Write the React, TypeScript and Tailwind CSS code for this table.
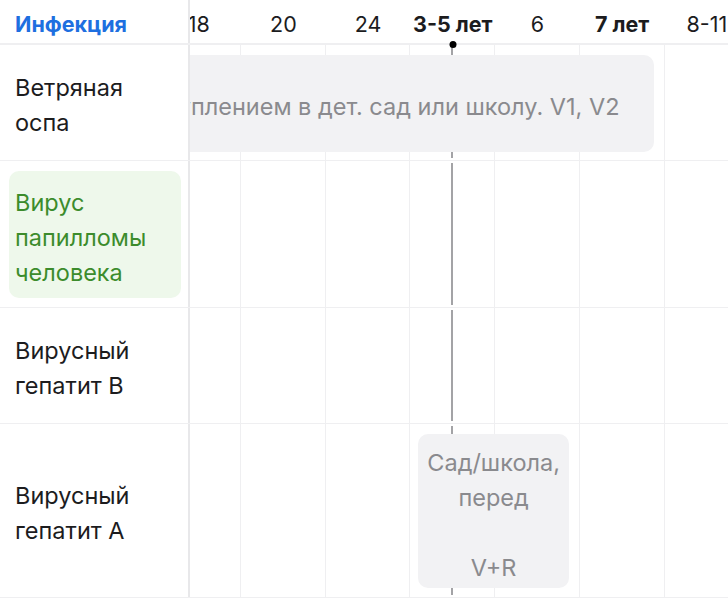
const COLS = ['12', '15', '18', '20', '24', '3-5 лет', '6', '7 лет', '8-11'];
const BOLD = ['3-5 лет', '7 лет'];
const TODAY = 5;
const START = ['col-start-1', 'col-start-2', 'col-start-3', 'col-start-4', 'col-start-5', 'col-start-6', 'col-start-7', 'col-start-8', 'col-start-9'];

function Cells() {
  return <>
    {COLS.map((c, i) => (
      <div key={c} className={`${START[i]} row-start-1 relative border-r border-[#efeff1]`}>
        {i === TODAY && <div className="absolute left-1/2 -translate-x-1/2 top-[2px] bottom-[2px] w-[2px] bg-[#a3a3a6]" />}
      </div>
    ))}
  </>;
}

function Row({ height, label, children }: { height: string; label: React.ReactNode; children?: React.ReactNode }) {
  return <div className={`flex border-b border-[#efeff1] ${height}`}>
    <div className="w-[190px] shrink-0 border-r-2 border-[#e8e8ea] flex">{label}</div>
    <div className="flex-1 overflow-x-clip">
      <div className="ml-[-203px] grid grid-cols-[repeat(9,84.7px)] h-full">
        <Cells />
        {children}
      </div>
    </div>
  </div>;
}

function Name({ lines }: { lines: string[] }) {
  return <div className="px-[15px] pt-[5px] flex flex-col justify-center text-[23.5px] leading-[35px] text-[#1c1c1e]">
    {lines.map(l => <span key={l}>{l}</span>)}
  </div>;
}

export default function App() {
  return <div className="w-[728px] h-[600px] overflow-hidden bg-white font-['Inter',sans-serif]">
    <div className="flex h-[45px] border-b-2 border-[#efeff1]">
      <div className="w-[190px] shrink-0 border-r-2 border-[#e8e8ea] px-[15px] pt-[5px] flex items-center text-[21.5px] font-bold text-[#1e6fe0]">Инфекция</div>
      <div className="flex-1 overflow-x-clip">
        <div className="ml-[-203px] grid grid-cols-[repeat(9,84.7px)] h-full">
          {COLS.map((c, i) => (
            <div key={c} className={`relative pt-[5px] flex items-center justify-center whitespace-nowrap text-[21.5px] text-[#1c1c1e] ${BOLD.includes(c) ? 'font-bold' : ''}`}>
              {c}
              {i === TODAY && <div className="absolute left-1/2 -translate-x-1/2 bottom-[-5px] w-[7px] h-[7px] rounded-full bg-black z-10" />}
            </div>
          ))}
        </div>
      </div>
    </div>

    <Row height="h-[116px]" label={<Name lines={['Ветряная', 'оспа']} />}>
      <div className="col-start-1 col-span-8 row-start-1 relative z-10 mt-[10px] mb-[8px] mr-[11px] rounded-[10px] bg-[#f2f2f4] overflow-hidden flex items-center justify-end pt-[6px] pr-[34px] whitespace-nowrap text-[23.5px] text-[#8a8a8e]">
        Перед поступлением в дет. сад или школу. V1, V2
      </div>
    </Row>

    <Row height="h-[147px]" label={
      <div className="flex-1 mt-[10px] mb-[9px] ml-[9px] mr-[7px] rounded-[10px] bg-[#eef8eb] px-[6px] pt-[5px] flex flex-col justify-center text-[23.5px] leading-[35px] text-[#3c8c2c]">
        <span>Вирус</span>
        <span>папилломы</span>
        <span>человека</span>
      </div>
    } />

    <Row height="h-[116px]" label={<Name lines={['Вирусный', 'гепатит B']} />} />

    <Row height="h-[174px]" label={<Name lines={['Вирусный', 'гепатит A']} />}>
      <div className="col-start-6 col-span-2 row-start-1 relative z-10 mt-[10px] mb-[9px] ml-[8px] mr-[11px] rounded-[10px] bg-[#f2f2f4] pt-[11px] flex flex-col items-center text-[23.5px] leading-[35px] text-[#8a8a8e]">
        <span>Сад/школа,</span>
        <span>перед</span>
        <span>&nbsp;</span>
        <span>V+R</span>
      </div>
    </Row>
  </div>;
}
